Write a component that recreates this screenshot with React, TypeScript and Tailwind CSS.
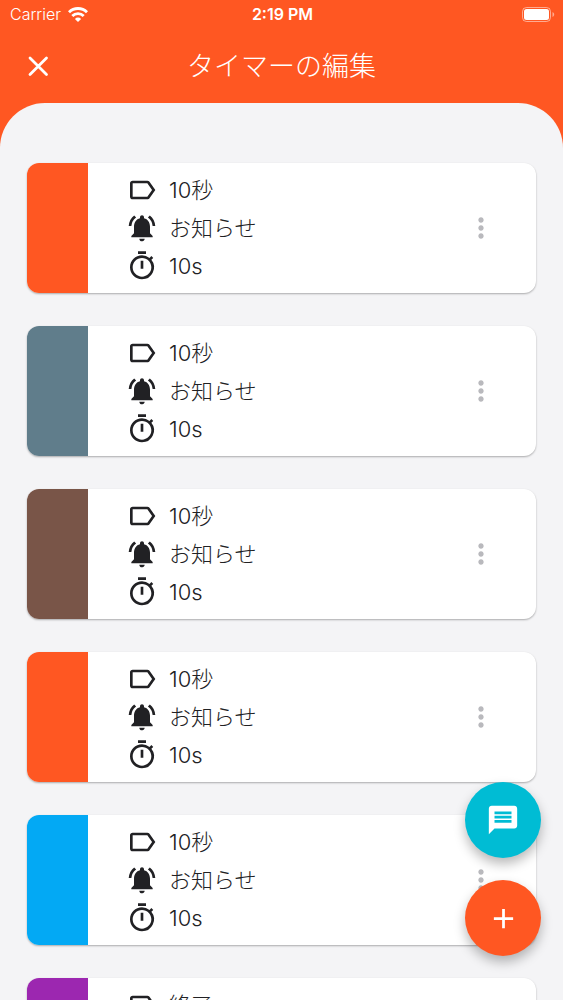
import { useState } from "react";
import {
  MdAdd,
  MdLabelOutline,
  MdMessage,
  MdMoreVert,
  MdNotificationsActive,
  MdOutlineTimer,
} from "react-icons/md";

type Timer = {
  id: number;
  color: string;
  label: string;
  sound: string;
  duration: string;
};

const initialTimers: Timer[] = [
  { id: 1, color: "bg-[#ff5722]", label: "10秒", sound: "お知らせ", duration: "10s" },
  { id: 2, color: "bg-[#607d8b]", label: "10秒", sound: "お知らせ", duration: "10s" },
  { id: 3, color: "bg-[#795548]", label: "10秒", sound: "お知らせ", duration: "10s" },
  { id: 4, color: "bg-[#ff5722]", label: "10秒", sound: "お知らせ", duration: "10s" },
  { id: 5, color: "bg-[#03a9f4]", label: "10秒", sound: "お知らせ", duration: "10s" },
  { id: 6, color: "bg-[#9c27b0]", label: "終了", sound: "お知らせ", duration: "10s" },
];

function WifiIcon() {
  return (
    <svg viewBox="0 0 20 15" className="h-[15px] w-5" fill="none" stroke="currentColor" strokeWidth="2.9">
      <path d="M1 5.2a12.8 12.8 0 0 1 18 0" />
      <path d="M4.3 9a8.1 8.1 0 0 1 11.4 0" />
      <path d="M10 15 6.900 11.900a4.400 4.400 0 0 1 6.200 0z" fill="currentColor" stroke="none" />
    </svg>
  );
}

function BatteryIcon() {
  return (
    <svg viewBox="0 0 33 15" className="h-[15px] w-[33px]" fill="none">
      <rect x="0.5" y="0.5" width="28" height="14" rx="4" stroke="white" strokeOpacity="0.5" />
      <rect x="2" y="2" width="25" height="11" rx="2.5" fill="white" />
      <path d="M30.5 5v5c1-.4 1.7-1.4 1.7-2.5S31.5 5.4 30.5 5z" fill="white" fillOpacity="0.5" />
    </svg>
  );
}

function CloseIcon() {
  return (
    <svg viewBox="0 0 32 32" className="size-8" fill="none" stroke="currentColor" strokeWidth="2.8" strokeLinecap="round">
      <path d="M8 8l16.500 16.500M24.500 8 8 24.500" />
    </svg>
  );
}

function StatusBar() {
  return (
    <div className="grid h-7 grid-cols-3 items-center pr-2 pl-[10px] text-base">
      <div className="flex items-center gap-[7px]">
        <span className="font-light">Carrier</span>
        <WifiIcon />
      </div>
      <span className="text-center font-semibold">2:19 PM</span>
      <div className="flex justify-end">
        <BatteryIcon />
      </div>
    </div>
  );
}

function TimerCard({ timer }: { timer: Timer }) {
  return (
    <li className="flex h-[130px] shrink-0 overflow-hidden rounded-xl bg-white shadow-[0_1px_2px_rgba(0,0,0,0.3)]">
      <div className={`w-[61px] ${timer.color}`} />
      <div className="flex flex-1 flex-col justify-center gap-[6px] pl-[38px]">
        <div className="flex h-8 items-center gap-[11px]">
          <MdLabelOutline size={32} />
          <span>{timer.label}</span>
        </div>
        <div className="flex h-8 items-center gap-[11px]">
          <MdNotificationsActive size={32} />
          <span>{timer.sound}</span>
        </div>
        <div className="flex h-8 items-center gap-[11px]">
          <MdOutlineTimer size={32} />
          <span>{timer.duration}</span>
        </div>
      </div>
      <button type="button" aria-label="メニュー" className="mr-[39px] text-[#b9b9bd]">
        <MdMoreVert size={32} />
      </button>
    </li>
  );
}

export default function App() {
  const [timers, setTimers] = useState<Timer[]>(initialTimers);

  const handleAdd = () => {
    setTimers((prev) => [
      ...prev,
      { id: prev.length + 1, color: "bg-[#ff5722]", label: "10秒", sound: "お知らせ", duration: "10s" },
    ]);
  };

  return (
    <div className="relative flex h-screen flex-col overflow-hidden bg-[#ff5722] font-['Inter','Noto_Sans_CJK_JP',sans-serif]">
      <header className="text-white">
        <StatusBar />
        <div className="grid h-[75px] grid-cols-[1fr_auto_1fr] items-center px-[22px]">
          <button type="button" aria-label="閉じる" className="justify-self-start">
            <CloseIcon />
          </button>
          <h1 className="pt-1 text-[27px] font-light">タイマーの編集</h1>
        </div>
      </header>

      <main className="min-h-0 flex-1 overflow-y-auto rounded-t-[45px] bg-[#f4f4f6] [scrollbar-width:none]">
        <ul className="flex flex-col gap-[33px] px-[27px] py-[60px] text-[22px] font-light text-[#212124]">
          {timers.map((timer) => (
            <TimerCard key={timer.id} timer={timer} />
          ))}
        </ul>
      </main>

      <div className="absolute right-[22px] bottom-11 flex flex-col gap-[22px] text-white">
        <button
          type="button"
          aria-label="メッセージ"
          className="flex size-[76px] items-center justify-center rounded-full bg-[#00bcd4] shadow-[0_6px_12px_rgba(0,0,0,0.28)]"
        >
          <MdMessage size={34} />
        </button>
        <button
          type="button"
          aria-label="追加"
          onClick={handleAdd}
          className="flex size-[76px] items-center justify-center rounded-full bg-[#ff5722] shadow-[0_6px_12px_rgba(0,0,0,0.28)]"
        >
          <MdAdd size={33} />
        </button>
      </div>
    </div>
  );
}
